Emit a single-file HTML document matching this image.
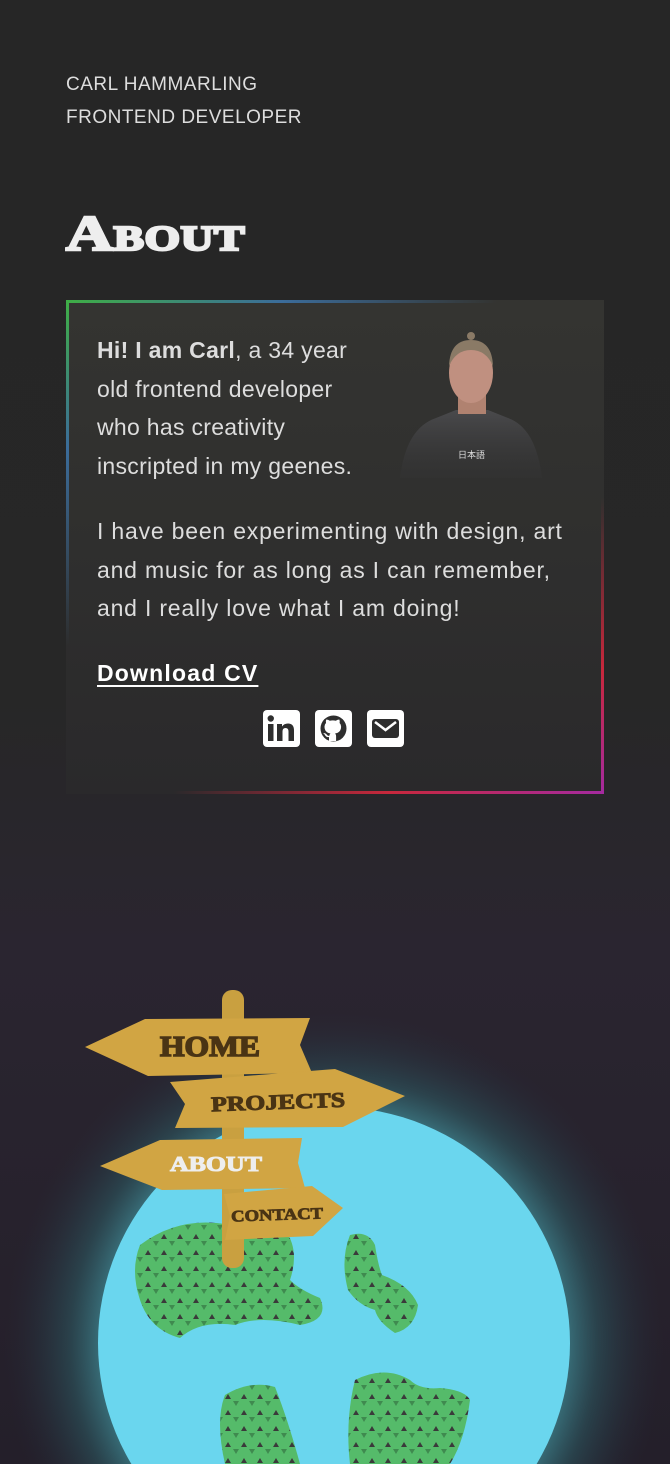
<!DOCTYPE html>
<html><head><meta charset="utf-8"><style>
html,body{margin:0;padding:0;overflow:hidden}
body{width:670px;height:1464px;overflow:hidden;position:relative;font-family:"Liberation Sans",sans-serif;
background:linear-gradient(180deg,#262626 0px,#272727 700px,#2a2530 950px,#241f2a 1464px);}
.hdr{position:absolute;left:66px;top:68px;color:#ddd;font-size:19px;line-height:33px;letter-spacing:0.5px;font-weight:300}
h1{position:absolute;left:66px;top:204px;margin:0;color:#eee;font-family:"Liberation Serif",serif;font-weight:bold;font-size:50px;font-variant:small-caps;-webkit-text-stroke:2.5px #eee;transform:scaleX(1.3);transform-origin:left top;letter-spacing:0.5px}
.card{position:absolute;left:66px;top:300px;width:538px;height:494px;box-sizing:border-box;
background:linear-gradient(180deg,#343431 0%,#2f2f2e 50%,#2a292b 100%);}
.bl{position:absolute;left:0;top:0;width:3px;height:100%;background:linear-gradient(180deg,#3fae46 0%,#3b6c9a 30%,rgba(60,80,110,0) 70%)}
.bt{position:absolute;left:0;top:0;height:3px;width:100%;background:linear-gradient(90deg,#3fae46 0%,#3b6c9a 40%,rgba(60,80,110,0) 80%)}
.br{position:absolute;right:0;top:0;width:3px;height:100%;background:linear-gradient(180deg,rgba(200,40,60,0) 40%,#c8283c 75%,#a52aa0 100%)}
.bb{position:absolute;left:0;bottom:0;height:3px;width:100%;background:linear-gradient(90deg,rgba(200,40,60,0) 20%,#c8283c 60%,#a52aa0 100%)}
.p{position:absolute;left:31px;color:#ddd;font-size:23px;line-height:38.5px;white-space:nowrap;letter-spacing:0.3px}
.dl{position:absolute;left:31px;top:360px;color:#fff;font-weight:bold;font-size:23px;letter-spacing:1.2px;text-decoration:underline;text-underline-offset:4px}
.icons{position:absolute;left:197px;top:410px;display:flex;gap:15px}
.ic{width:37px;height:37px;background:#fff;border-radius:4px;position:relative}
</style></head><body>
<div class="hdr">CARL HAMMARLING<br>FRONTEND DEVELOPER</div>
<h1>About</h1>
<div class="card">
<div class="bl"></div><div class="bt"></div><div class="br"></div><div class="bb"></div>
<div class="p" style="top:31px"><b>Hi! I am Carl</b>, a 34 year<br>old frontend developer<br>who has creativity<br>inscripted in my geenes.</div>
<svg style="position:absolute;left:330px;top:28px" width="150" height="155" viewBox="0 0 150 155">
<defs><linearGradient id="sh" x1="0" y1="0" x2="0" y2="1"><stop offset="0" stop-color="#4a4a4c"/><stop offset="1" stop-color="#343436" stop-opacity="0.3"/></linearGradient></defs>
<path d="M4 150 Q10 100 40 90 L60 82 L92 82 L112 90 Q140 100 146 150 Z" fill="url(#sh)"/>
<rect x="62" y="66" width="28" height="20" fill="#b08270"/>
<ellipse cx="75" cy="45" rx="22" ry="30" fill="#c09080"/>
<path d="M53 38 Q54 12 75 12 Q96 12 97 38 Q90 22 75 22 Q60 22 53 38Z" fill="#8a7a66"/>
<circle cx="75" cy="8" r="4" fill="#8a7a66"/>
<text x="62" y="130" fill="#ddd" font-size="9" font-family="Noto Sans CJK JP,sans-serif">日本語</text>
</svg>
<div class="p" style="top:212px;letter-spacing:0.8px">I have been experimenting with design, art<br>and music for as long as I can remember,<br>and I really love what I am doing!</div>
<div class="dl">Download CV</div>
<div class="icons">
<div class="ic"><svg width="37" height="37" viewBox="0 0 37 37"><rect x="5" y="14" width="5.5" height="17" fill="#2e2e2e"/><circle cx="7.75" cy="8.5" r="3.2" fill="#2e2e2e"/><path d="M14 14h5v2.5q2-3 6-3q6 0 6 7V31h-5.5V21.5q0-3.5-3-3.5t-3 3.5V31H14Z" fill="#2e2e2e"/></svg></div>
<div class="ic"><svg width="37" height="37" viewBox="0 0 37 37"><circle cx="18.5" cy="18.5" r="13" fill="#2e2e2e"/><path d="M14 31v-4q-3 0.5-4-2q-1-1.5-2-2q3 0 4 2q1.5 1.5 2.5 0.5q0-1.5 1-2q-6-1-6-7q0-2 1.5-3.5q-0.5-2 0.3-3.5q2 0 3.5 1.3q3-0.8 6 0q1.5-1.3 3.5-1.3q0.8 1.5 0.3 3.5q1.5 1.5 1.5 3.5q0 6-6 7q1 1 1 3v4.5Z" fill="#fff"/></svg></div>
<div class="ic"><svg width="37" height="37" viewBox="0 0 37 37"><rect x="5" y="9" width="27" height="19" rx="3" fill="#2e2e2e"/><path d="M8 12l10.5 8l10.5-8" stroke="#fff" stroke-width="2.5" fill="none"/></svg></div>
</div>
</div>
<svg style="position:absolute;left:0;top:960px;display:block" width="670" height="504" viewBox="0 960 670 504">
<defs>
<radialGradient id="glow" cx="334" cy="1343" r="330" gradientUnits="userSpaceOnUse"><stop offset="0.65" stop-color="#4fb8c4" stop-opacity="0.75"/><stop offset="0.8" stop-color="#2f6a72" stop-opacity="0.45"/><stop offset="1" stop-color="#243040" stop-opacity="0"/></radialGradient>
<pattern id="tri" width="16" height="16" patternUnits="userSpaceOnUse"><rect width="16" height="16" fill="#55bb6a"/><path d="M4 2l3 5h-6z" fill="#3a3a3a"/><path d="M9 9h6l-3 5z" fill="#3f8a4f"/></pattern>
</defs>
<rect x="0" y="960" width="670" height="504" fill="url(#glow)"/>
<circle cx="334" cy="1343" r="236" fill="#6ad6ee"/>
<path d="M140 1245 Q180 1215 230 1225 Q270 1215 285 1230 Q300 1250 290 1280 Q300 1290 320 1298 Q330 1320 300 1325 Q260 1315 235 1325 Q200 1320 180 1338 Q150 1330 140 1300 Q130 1270 140 1245Z" fill="url(#tri)"/>
<path d="M350 1235 Q368 1230 375 1245 Q378 1265 382 1275 Q410 1285 418 1305 Q415 1328 395 1333 Q378 1322 375 1310 Q358 1305 348 1290 Q340 1260 350 1235Z" fill="url(#tri)"/>
<path d="M225 1395 Q250 1380 275 1387 Q288 1420 300 1464 L225 1464 Q215 1420 225 1395Z" fill="url(#tri)"/>
<path d="M355 1380 Q385 1365 410 1380 Q420 1390 440 1388 Q465 1390 470 1400 Q465 1440 450 1464 L350 1464 Q345 1420 355 1380Z" fill="url(#tri)"/>
<rect x="222" y="990" width="22" height="278" rx="10" fill="#c9a040"/>
<polygon points="85,1047 145,1019 310,1018 300,1045 312,1073 148,1076" fill="#d1a543"/>
<text x="210" y="1056" text-anchor="middle" font-family="Liberation Serif,serif" font-weight="bold" font-size="28" fill="#4a3414" stroke="#4a3414" stroke-width="1.5" textLength="100" lengthAdjust="spacingAndGlyphs">HOME</text>
<polygon points="170,1082 335,1069 405,1096 343,1127 175,1128 185,1104" fill="#d1a543"/>
<text x="278" y="1109" text-anchor="middle" font-family="Liberation Serif,serif" font-weight="bold" font-size="21" fill="#4a3414" stroke="#4a3414" stroke-width="1" textLength="134" lengthAdjust="spacingAndGlyphs" transform="rotate(-2 278 1100)">PROJECTS</text>
<polygon points="100,1166 160,1140 302,1138 298,1163 305,1188 162,1190" fill="#d1a543"/>
<text x="216" y="1171" text-anchor="middle" font-family="Liberation Serif,serif" font-weight="bold" font-size="21" fill="#eee" stroke="#eee" stroke-width="1" textLength="92" lengthAdjust="spacingAndGlyphs">ABOUT</text>
<polygon points="224,1194 312,1186 343,1208 313,1236 225,1240 230,1216" fill="#d1a543"/>
<text x="277" y="1220" text-anchor="middle" font-family="Liberation Serif,serif" font-weight="bold" font-size="16" fill="#4a3414" stroke="#4a3414" stroke-width="0.8" textLength="92" lengthAdjust="spacingAndGlyphs" transform="rotate(-2 277 1212)">CONTACT</text>
</svg>
</body></html>
